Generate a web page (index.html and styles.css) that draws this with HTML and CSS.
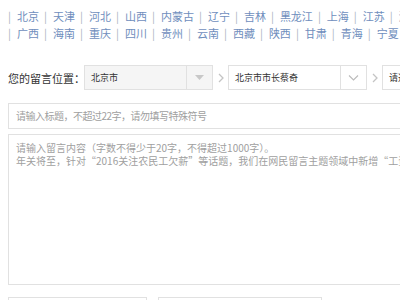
FILE: index.html
```html
<!DOCTYPE html>
<html lang="zh-CN">
<head>
<meta charset="utf-8">
<link rel="stylesheet" href="styles.css">
</head>
<body>
<div class="page">
  <div class="regions">
    <div class="region-row">
      <span class="sep">|</span><a class="region">北京</a><span class="sep">|</span><a class="region">天津</a><span class="sep">|</span><a class="region">河北</a><span class="sep">|</span><a class="region">山西</a><span class="sep">|</span><a class="region">内蒙古</a><span class="sep">|</span><a class="region">辽宁</a><span class="sep">|</span><a class="region">吉林</a><span class="sep">|</span><a class="region">黑龙江</a><span class="sep">|</span><a class="region">上海</a><span class="sep">|</span><a class="region">江苏</a><span class="sep">|</span><a class="region">浙江</a>
    </div>
    <div class="region-row">
      <span class="sep">|</span><a class="region">广西</a><span class="sep">|</span><a class="region">海南</a><span class="sep">|</span><a class="region">重庆</a><span class="sep">|</span><a class="region">四川</a><span class="sep">|</span><a class="region">贵州</a><span class="sep">|</span><a class="region">云南</a><span class="sep">|</span><a class="region">西藏</a><span class="sep">|</span><a class="region">陕西</a><span class="sep">|</span><a class="region">甘肃</a><span class="sep">|</span><a class="region">青海</a><span class="sep">|</span><a class="region">宁夏</a>
    </div>
  </div>

  <div class="location">
    <span class="loc-label">您的留言位置：</span>
    <div class="select select-disabled">
      <span class="select-text">北京市</span>
      <span class="select-arrow"><svg width="9" height="5" viewBox="0 0 9 5"><path d="M0 0 L9 0 L4.5 5 Z" fill="#c8c8c8"/></svg></span>
    </div>
    <span class="chev"><svg width="6" height="10" viewBox="0 0 6 10"><path d="M1 1 L5 5 L1 9" fill="none" stroke="#c4c4c4" stroke-width="1.3"/></svg></span>
    <div class="select select-2">
      <span class="select-text">北京市市长蔡奇</span>
      <span class="select-arrow"><svg width="11" height="6" viewBox="0 0 11 6"><path d="M1 0.5 L5.5 5 L10 0.5" fill="none" stroke="#bbb" stroke-width="1.1"/></svg></span>
    </div>
    <span class="chev"><svg width="6" height="10" viewBox="0 0 6 10"><path d="M1 1 L5 5 L1 9" fill="none" stroke="#c4c4c4" stroke-width="1.3"/></svg></span>
    <div class="select select-3">
      <span class="select-text">请选择留言对象</span>
    </div>
  </div>

  <div class="title-input">请输入标题，不超过22字，请勿填写特殊符号</div>

  <div class="content-input">
    <p>请输入留言内容（字数不得少于20字，不得超过1000字）。</p>
    <p>年关将至，针对“2016关注农民工欠薪”等话题，我们在网民留言主题领域中新增“工资拖欠”分类。</p>
  </div>

  <div class="bottom-row">
    <div class="bottom-box box-a"></div>
    <div class="bottom-box box-b"></div>
  </div>
</div>
</body>
</html>
```

FILE: styles.css
```css
html, body {
  margin: 0;
  padding: 0;
  background: #fff;
  overflow: hidden;
}
body {
  font-family: "Noto Sans CJK SC", "Noto Sans", sans-serif;
  font-size: 12px;
  color: #333;
}
.page {
  padding: 8px;
  width: 760px;
}
.regions {
  display: flex;
  flex-direction: column;
}
.region-row {
  display: flex;
  white-space: nowrap;
  font-size: 11px;
  line-height: 17px;
}
.sep {
  color: #aab4c2;
  margin: 0 6px 0 5px;
}
.region-row .sep:first-child {
  margin-left: 0;
}
.region {
  color: #6f8ebd;
  text-decoration: none;
}
.location {
  display: flex;
  align-items: center;
  margin-top: 23px;
  height: 25px;
}
.loc-label {
  color: #333;
  font-size: 11px;
  white-space: nowrap;
  flex-shrink: 0;
  width: 76px;
}
.select {
  display: flex;
  align-items: stretch;
  flex-shrink: 0;
  height: 25px;
  box-sizing: border-box;
  border: 1px solid #e1e1e1;
  background: #fff;
}
.select-disabled {
  width: 129px;
  background: #f5f5f5;
}
.select-2 {
  width: 139px;
}
.select-3 {
  width: 160px;
}
.select-text {
  flex: 1;
  padding-left: 6px;
  font-size: 9px;
  line-height: 23px;
  color: #333;
  white-space: nowrap;
  overflow: hidden;
}
.select-arrow {
  width: 25px;
  border-left: 1px solid #e1e1e1;
  display: flex;
  align-items: center;
  justify-content: center;
}
.chev {
  width: 15px;
  flex-shrink: 0;
  display: flex;
  justify-content: center;
  align-items: center;
}
.title-input {
  margin-top: 13px;
  height: 26px;
  box-sizing: border-box;
  border: 1px solid #e1e1e1;
  font-size: 10px;
  letter-spacing: -0.5px;
  line-height: 24px;
  padding-left: 7px;
  color: #a0a0a0;
  white-space: nowrap;
}
.content-input {
  margin-top: 5px;
  height: 151px;
  box-sizing: border-box;
  border: 1px solid #e1e1e1;
  padding: 6px 7px;
  font-size: 10px;
  color: #a0a0a0;
  line-height: 13px;
}
.content-input p {
  margin: 0;
  white-space: nowrap;
}
.bottom-row {
  display: flex;
  margin-top: 12px;
  gap: 11px;
}
.bottom-box {
  height: 26px;
  box-sizing: border-box;
  border: 1px solid #e1e1e1;
}
.box-a {
  width: 139px;
}
.box-b {
  width: 164px;
}
```
